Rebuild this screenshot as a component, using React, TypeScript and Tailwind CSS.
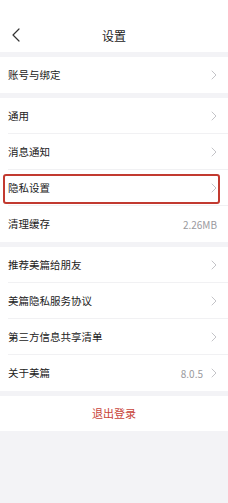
function Chevron() {
  return (
    <svg width="6" height="10" viewBox="0 0 6 10" className="shrink-0">
      <path d="M1 1l4 4-4 4" fill="none" stroke="#c4c4c8" strokeWidth="1" strokeLinecap="round" strokeLinejoin="round" />
    </svg>
  );
}

type Item = { label: string; value?: string; arrow?: boolean; highlight?: boolean };

function Row({ item, last }: { item: Item; last: boolean }) {
  return (
    <div className="relative flex h-9 items-center pl-2 pr-[11px]">
      <span className="flex-1 text-[10.5px] text-[#222]">{item.label}</span>
      {item.value && <span className="text-[10px] text-[#9a9a9e]">{item.value}</span>}
      {item.arrow !== false && (
        <span className={item.value ? "ml-2" : ""}>
          <Chevron />
        </span>
      )}
      {!last && <div className="absolute bottom-0 left-2 right-0 h-px bg-[#f1f1f3]" />}
      {item.highlight && (
        <div className="absolute bottom-[2px] left-[3px] right-[8px] top-[4px] rounded-[3px] border-2 border-[#c23a30]" />
      )}
    </div>
  );
}

function Group({ items }: { items: Item[] }) {
  return (
    <div className="mt-[5px] bg-white">
      {items.map((it, i) => (
        <Row key={it.label} item={it} last={i === items.length - 1} />
      ))}
    </div>
  );
}

export default function App() {
  return (
    <div className="min-h-[503px] w-[228px] bg-[#f3f3f6]" style={{ fontFamily: '"Noto Sans CJK SC", "Noto Sans", sans-serif' }}>
      <div className="relative flex h-[52px] items-end justify-center bg-white pb-[7px]">
        <svg width="8" height="14" viewBox="0 0 8 14" className="absolute bottom-[10px] left-[12px]">
          <path d="M7 1L1 7l6 6" fill="none" stroke="#333" strokeWidth="1.2" strokeLinecap="round" strokeLinejoin="round" />
        </svg>
        <span className="text-[12px] text-[#222]">设置</span>
      </div>
      <Group items={[{ label: "账号与绑定" }]} />
      <Group
        items={[
          { label: "通用" },
          { label: "消息通知" },
          { label: "隐私设置", highlight: true },
          { label: "清理缓存", value: "2.26MB", arrow: false },
        ]}
      />
      <Group
        items={[
          { label: "推荐美篇给朋友" },
          { label: "美篇隐私服务协议" },
          { label: "第三方信息共享清单" },
          { label: "关于美篇", value: "8.0.5" },
        ]}
      />
      <div className="mt-[5px] flex h-[35px] items-center justify-center bg-white">
        <span className="text-[11px] text-[#c8443a]">退出登录</span>
      </div>
    </div>
  );
}
